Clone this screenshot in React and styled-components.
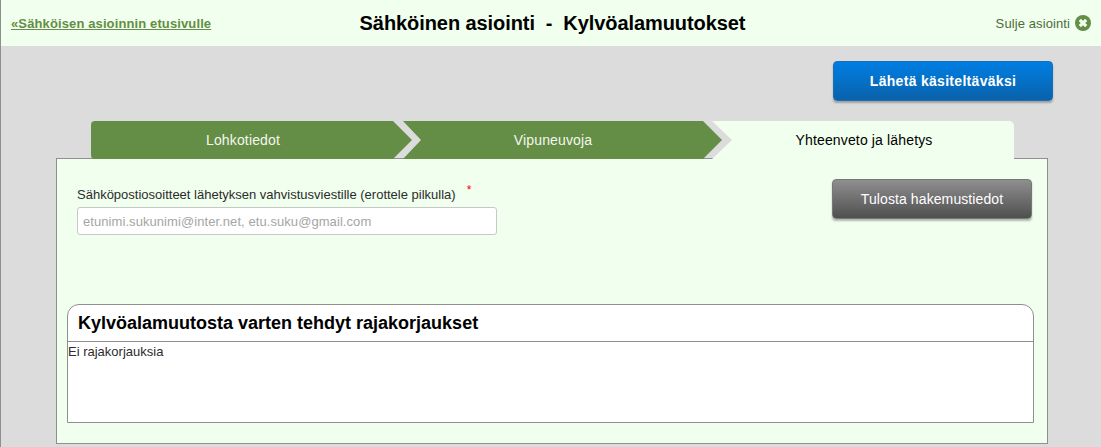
import styled, { createGlobalStyle } from 'styled-components';

const GlobalStyle = createGlobalStyle`
    html, body {
        margin: 0;
        padding: 0;
        background: #dcdcdc;
    }
    body {
        font-family: "Liberation Sans", Arial, sans-serif;
        overflow: hidden;
    }
`
const Page = styled.div`
    width: 1101px;
    height: 447px;
    box-sizing: border-box;
    border-left: solid 1px #8f8f8f;
    background: #dcdcdc;
    overflow: hidden;
`
const Header = styled.header`
    height: 46px;
    display: grid;
    grid-template-columns: 1fr auto 1fr;
    align-items: center;
    padding: 0 10px 0 10px;
    background: #f0ffee;
`
const HomeLink = styled.a`
    font-size: 13px;
    font-weight: 700;
    letter-spacing: 0.12px;
    color: #648d45;
    text-decoration: underline;
`
const Title = styled.h1`
    margin: 0;
    padding-left: 3px;
    font-size: 20px;
    font-weight: 700;
    letter-spacing: -0.08px;
    color: #000;
    white-space: pre;
`
const CloseLink = styled.a`
    justify-self: end;
    display: flex;
    align-items: center;
    gap: 5px;
    font-size: 13px;
    letter-spacing: 0.1px;
    color: #4e6b38;
`
const Actions = styled.div`
    display: flex;
    justify-content: flex-end;
    padding: 15px 48px 20px 0;
`
const Button = styled.button`
    width: ${(p) => p.$width}px;
    height: 40px;
    padding: 0;
    border: solid 1px ${(p) => p.$edge};
    border-radius: 4px;
    background: linear-gradient(${(p) => p.$from}, ${(p) => p.$to});
    box-shadow: 0 2px 2px rgba(0, 0, 0, 0.28);
    font-family: inherit;
    font-size: 14px;
    font-weight: ${(p) => (p.$bold ? 700 : 400)};
    letter-spacing: ${(p) => (p.$bold ? '0.3px' : '0.1px')};
    color: #fff;
`
const Tabs = styled.div`
    position: relative;
    z-index: 1;
    display: flex;
    height: 38px;
    margin: 0 0 -1px 90px;
`
const Tab = styled.div`
    box-sizing: border-box;
    width: ${(p) => p.$width}px;
    margin-left: ${(p) => p.$overlap || 0}px;
    display: flex;
    align-items: center;
    justify-content: center;
    padding-left: ${(p) => p.$padLeft || 0}px;
    padding-right: ${(p) => p.$padRight || 0}px;
    font-size: 14px;
    letter-spacing: 0.15px;
    color: ${(p) => (p.$active ? '#000' : '#f4f7ee')};
    background: ${(p) => (p.$active ? '#f0ffee' : '#648d45')};
    border-radius: ${(p) => p.$radius};
    clip-path: ${(p) => p.$clip};
`
const Panel = styled.section`
    box-sizing: border-box;
    height: 286px;
    margin: 0 53px 0 55px;
    padding: 20px 13px 20px 10px;
    border: solid 1px #8f8f8f;
    background: #f0ffee;
    display: flex;
    flex-direction: column;
`
const TopRow = styled.div`
    display: flex;
    justify-content: space-between;
    align-items: flex-start;
    height: 126px;
    padding: 0 2px 0 10px;
`
const Field = styled.div`
    display: flex;
    flex-direction: column;
    gap: 4px;
    padding-top: 8px;
`
const Label = styled.label`
    font-size: 13px;
    line-height: 16px;
    color: #2c2c2c;
`
const Required = styled.sup`
    margin-left: 11px;
    font-size: 12px;
    line-height: 0;
    color: #f00;
`
const EmailInput = styled.input`
    box-sizing: border-box;
    width: 420px;
    height: 28px;
    padding: 0 5px;
    border: solid 1px #c8c8c8;
    border-radius: 3px;
    background: #fff;
    font-family: inherit;
    font-size: 13px;
    letter-spacing: 0.07px;
    &::placeholder {
        color: #a5a5a5;
        opacity: 1;
    }
`
const Corrections = styled.div`
    box-sizing: border-box;
    height: 120px;
    border: solid 1px #8f8f8f;
    border-radius: 12px 12px 0 0;
    background: #fff;
`
const CorrectionsTitle = styled.h2`
    box-sizing: border-box;
    height: 37px;
    margin: 0;
    padding: 2px 0 0 10px;
    display: flex;
    align-items: center;
    border-bottom: solid 1px #8f8f8f;
    font-size: 18px;
    font-weight: 700;
    color: #000;
`
const CorrectionsText = styled.p`
    margin: 0;
    font-size: 13px;
    line-height: 19px;
    color: #2c2c2c;
`

const CloseIcon = () => (
    <svg width="16" height="16" viewBox="0 0 16 16">
        <circle cx="8" cy="8" r="8" fill="#648d45" />
        <path d="M4.8 4.8 L11.2 11.2 M11.2 4.8 L4.8 11.2" stroke="#f0ffee" strokeWidth="3.2" />
    </svg>
)

export default function App () {

    return (
        <>
            <GlobalStyle />
            <Page>
                <Header>
                    <HomeLink href="#">«Sähköisen asioinnin etusivulle</HomeLink>
                    <Title>Sähköinen asiointi  -  Kylvöalamuutokset</Title>
                    <CloseLink>Sulje asiointi <CloseIcon /></CloseLink>
                </Header>

                <Actions>
                    <Button $width={220} $from="#007ee3" $to="#0a62aa" $edge="#1b6fb5" $bold>Lähetä käsiteltäväksi</Button>
                </Actions>

                <Tabs>
                    <Tab
                        $width={321}
                        $padRight={17}
                        $radius="4px 0 0 4px"
                        $clip="polygon(0 0, 302px 0, 321px 50%, 302px 100%, 0 100%)"
                    >
                        Lohkotiedot
                    </Tab>
                    <Tab
                        $width={319}
                        $overlap={-9}
                        $padRight={19}
                        $clip="polygon(0 0, 300px 0, 319px 50%, 300px 100%, 0 100%, 18px 50%)"
                    >
                        Vipuneuvoja
                    </Tab>
                    <Tab
                        $width={302}
                        $overlap={-10}
                        $padLeft={2}
                        $active
                        $radius="0 5px 0 0"
                        $clip="polygon(0 0, 100% 0, 100% 100%, 0 100%, 20px 50%)"
                    >
                        Yhteenveto ja lähetys
                    </Tab>
                </Tabs>

                <Panel>
                    <TopRow>
                        <Field>
                            <Label>
                                Sähköpostiosoitteet lähetyksen vahvistusviestille (erottele pilkulla)
                                <Required>*</Required>
                            </Label>
                            <EmailInput placeholder="etunimi.sukunimi@inter.net, etu.suku@gmail.com" />
                        </Field>
                        <Button $width={200} $from="#8f8f8f" $to="#4f4f4f" $edge="#777">Tulosta hakemustiedot</Button>
                    </TopRow>

                    <Corrections>
                        <CorrectionsTitle>Kylvöalamuutosta varten tehdyt rajakorjaukset</CorrectionsTitle>
                        <CorrectionsText>Ei rajakorjauksia</CorrectionsText>
                    </Corrections>
                </Panel>
            </Page>
        </>
    )
}
